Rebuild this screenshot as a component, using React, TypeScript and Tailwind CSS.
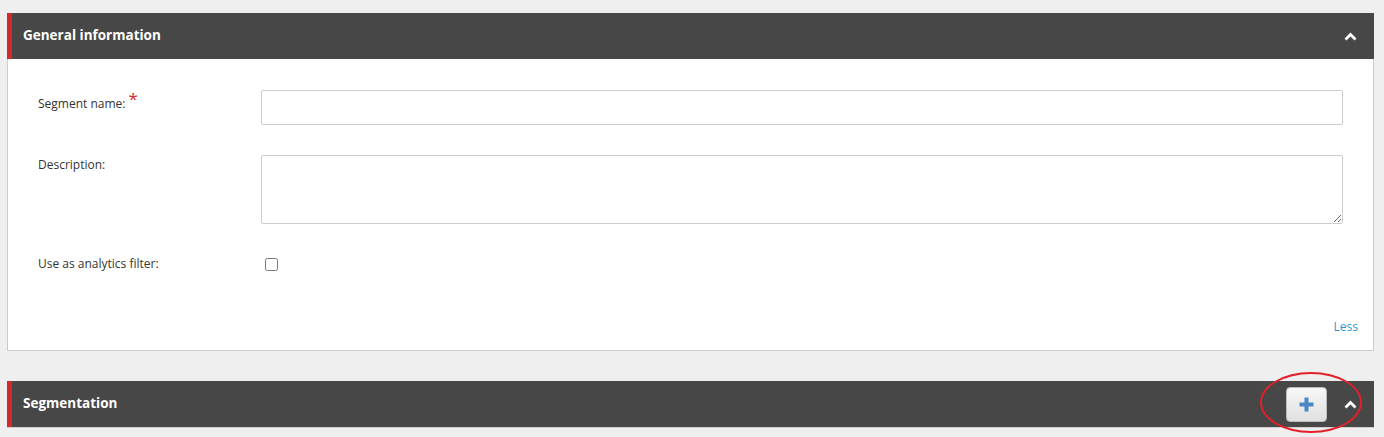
const FONT = "font-['Open_Sans',sans-serif]";

function Chevron() {
  return (
    <svg width="13" height="9" viewBox="0 0 13 9" aria-hidden>
      <path d="M1.5 7.5 L6.5 2.5 L11.5 7.5" fill="none" stroke="#fff" strokeWidth="2.8" strokeLinejoin="miter" />
    </svg>
  );
}

function PanelHeader({ title, children }: { title: string; children?: React.ReactNode }) {
  return (
    <div className="flex h-[46px] items-center border-l-[5px] border-[#d12b2b] bg-[#474747] pl-[11px] pr-[17px]">
      <h2 className="pb-[2px] text-[13.5px] font-bold text-white">{title}</h2>
      <div className="ml-auto flex items-center">
        {children}
        <Chevron />
      </div>
    </div>
  );
}

function Label({ children, required, className = "" }: { children: React.ReactNode; required?: boolean; className?: string }) {
  return (
    <div className={`w-[223px] shrink-0 text-[12px] text-[#333] ${className}`}>
      <label>{children}</label>
      {required && <span className="relative -top-[3px] ml-[3px] text-[17px] leading-none text-[#d12b2b]">*</span>}
    </div>
  );
}

export default function App() {
  return (
    <div className={`${FONT} min-h-[437px] bg-[#efefef] pl-[7px] pr-[10px] pt-[13px]`}>
      <section>
        <PanelHeader title="General information" />
        <div className="border border-t-0 border-[#cccccc] bg-white pb-[14px] pl-[30px] pr-[30px] pt-[31px]">
          <div className="flex items-start">
            <Label required className="pt-[3px]">Segment name:</Label>
            <input className="h-[35px] flex-1 rounded-[2px] border border-[#cccccc] px-2 text-[12px] outline-none" />
          </div>
          <div className="mt-[30px] flex items-start">
            <Label className="pt-[1px]">Description:</Label>
            <textarea className="h-[69px] flex-1 rounded-[2px] border border-[#cccccc] px-2 text-[12px] outline-none" />
          </div>
          <div className="mt-[31px] flex items-center">
            <Label>Use as analytics filter:</Label>
            <input type="checkbox" className="ml-[4px] h-[13px] w-[13px]" />
          </div>
          <div className="mt-[45px] flex justify-end">
            <a className="mr-[-15px] text-[12px] text-[#2a9ad4]">Less</a>
          </div>
        </div>
      </section>

      <section className="mt-[30px]">
        <PanelHeader title="Segmentation">
          <div className="relative mr-[17px] flex items-center">
            <span className="pointer-events-none absolute left-[-26px] top-[-15px] h-[61px] w-[102px] rounded-[50%] border-2 border-[#e3202b]" />
            <button className="flex h-[35px] w-[41px] items-center justify-center rounded-[4px] border border-[#bdbdbd] bg-gradient-to-b from-[#f7f7f7] to-[#e0e0e0]">
              <svg width="15" height="15" viewBox="0 0 15 15" aria-hidden>
                <path d="M7.5 0.5 V14.5 M0.5 7.5 H14.5" stroke="#4a86c5" strokeWidth="4" />
              </svg>
            </button>
          </div>
        </PanelHeader>
        <div className="h-px bg-[#d0d0d0]" />
      </section>
    </div>
  );
}
